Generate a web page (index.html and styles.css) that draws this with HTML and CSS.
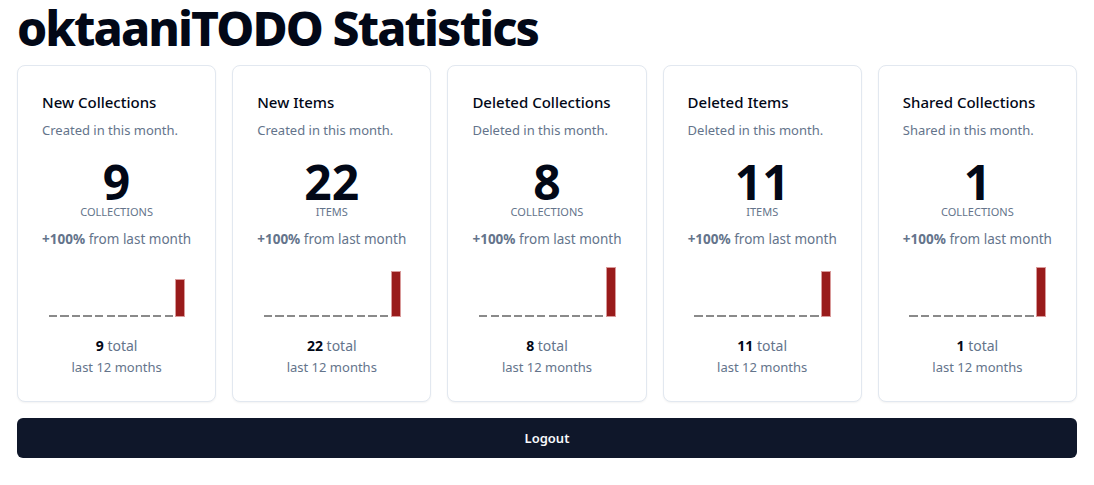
FILE: index.html
```html
<!DOCTYPE html>
<html lang="en">
<head>
<meta charset="utf-8">
<title>oktaaniTODO Statistics</title>
<link rel="stylesheet" href="styles.css">
</head>
<body>
<main class="page">
  <h1 class="title">oktaaniTODO Statistics</h1>
  <section class="cards">
    <article class="card">
      <header class="card-header">
        <h2 class="card-title">New Collections</h2>
        <p class="card-desc">Created in this month.</p>
      </header>
      <div class="card-content">
        <div class="big">9</div>
        <div class="unit">COLLECTIONS</div>
        <div class="change"><b>+100%</b> from last month</div>
        <div class="chart">
          <span class="slot"><i class="zero"></i></span><span class="slot"><i class="zero"></i></span><span class="slot"><i class="zero"></i></span><span class="slot"><i class="zero"></i></span><span class="slot"><i class="zero"></i></span><span class="slot"><i class="zero"></i></span><span class="slot"><i class="zero"></i></span><span class="slot"><i class="zero"></i></span><span class="slot"><i class="zero"></i></span><span class="slot"><i class="zero"></i></span><span class="slot"><i class="zero"></i></span><span class="slot"><i class="bar" style="height:38px"></i></span>
        </div>
        <div class="total"><b>9</b> total</div>
        <div class="period">last 12 months</div>
      </div>
    </article>
    <article class="card">
      <header class="card-header">
        <h2 class="card-title">New Items</h2>
        <p class="card-desc">Created in this month.</p>
      </header>
      <div class="card-content">
        <div class="big">22</div>
        <div class="unit">ITEMS</div>
        <div class="change"><b>+100%</b> from last month</div>
        <div class="chart">
          <span class="slot"><i class="zero"></i></span><span class="slot"><i class="zero"></i></span><span class="slot"><i class="zero"></i></span><span class="slot"><i class="zero"></i></span><span class="slot"><i class="zero"></i></span><span class="slot"><i class="zero"></i></span><span class="slot"><i class="zero"></i></span><span class="slot"><i class="zero"></i></span><span class="slot"><i class="zero"></i></span><span class="slot"><i class="zero"></i></span><span class="slot"><i class="zero"></i></span><span class="slot"><i class="bar" style="height:46px"></i></span>
        </div>
        <div class="total"><b>22</b> total</div>
        <div class="period">last 12 months</div>
      </div>
    </article>
    <article class="card">
      <header class="card-header">
        <h2 class="card-title">Deleted Collections</h2>
        <p class="card-desc">Deleted in this month.</p>
      </header>
      <div class="card-content">
        <div class="big">8</div>
        <div class="unit">COLLECTIONS</div>
        <div class="change"><b>+100%</b> from last month</div>
        <div class="chart">
          <span class="slot"><i class="zero"></i></span><span class="slot"><i class="zero"></i></span><span class="slot"><i class="zero"></i></span><span class="slot"><i class="zero"></i></span><span class="slot"><i class="zero"></i></span><span class="slot"><i class="zero"></i></span><span class="slot"><i class="zero"></i></span><span class="slot"><i class="zero"></i></span><span class="slot"><i class="zero"></i></span><span class="slot"><i class="zero"></i></span><span class="slot"><i class="zero"></i></span><span class="slot"><i class="bar" style="height:50px"></i></span>
        </div>
        <div class="total"><b>8</b> total</div>
        <div class="period">last 12 months</div>
      </div>
    </article>
    <article class="card">
      <header class="card-header">
        <h2 class="card-title">Deleted Items</h2>
        <p class="card-desc">Deleted in this month.</p>
      </header>
      <div class="card-content">
        <div class="big">11</div>
        <div class="unit">ITEMS</div>
        <div class="change"><b>+100%</b> from last month</div>
        <div class="chart">
          <span class="slot"><i class="zero"></i></span><span class="slot"><i class="zero"></i></span><span class="slot"><i class="zero"></i></span><span class="slot"><i class="zero"></i></span><span class="slot"><i class="zero"></i></span><span class="slot"><i class="zero"></i></span><span class="slot"><i class="zero"></i></span><span class="slot"><i class="zero"></i></span><span class="slot"><i class="zero"></i></span><span class="slot"><i class="zero"></i></span><span class="slot"><i class="zero"></i></span><span class="slot"><i class="bar" style="height:46px"></i></span>
        </div>
        <div class="total"><b>11</b> total</div>
        <div class="period">last 12 months</div>
      </div>
    </article>
    <article class="card">
      <header class="card-header">
        <h2 class="card-title">Shared Collections</h2>
        <p class="card-desc">Shared in this month.</p>
      </header>
      <div class="card-content">
        <div class="big">1</div>
        <div class="unit">COLLECTIONS</div>
        <div class="change"><b>+100%</b> from last month</div>
        <div class="chart">
          <span class="slot"><i class="zero"></i></span><span class="slot"><i class="zero"></i></span><span class="slot"><i class="zero"></i></span><span class="slot"><i class="zero"></i></span><span class="slot"><i class="zero"></i></span><span class="slot"><i class="zero"></i></span><span class="slot"><i class="zero"></i></span><span class="slot"><i class="zero"></i></span><span class="slot"><i class="zero"></i></span><span class="slot"><i class="zero"></i></span><span class="slot"><i class="zero"></i></span><span class="slot"><i class="bar" style="height:50px"></i></span>
        </div>
        <div class="total"><b>1</b> total</div>
        <div class="period">last 12 months</div>
      </div>
    </article>
  </section>
  <button class="logout" type="button">Logout</button>
</main>
</body>
</html>
```
FILE: styles.css
```css
* { box-sizing: border-box; }
html, body { margin: 0; padding: 0; background: #ffffff; }
body {
  font-family: "Noto Sans", "Open Sans", "Liberation Sans", sans-serif;
  color: #020817;
}
.page {
  padding: 0 17px 0 17px;
  display: flex;
  flex-direction: column;
}
.title {
  margin: 0;
  font-size: 48px;
  line-height: 56px;
  font-weight: 800;
  letter-spacing: -1.9px;
  color: #020817;
}
.cards {
  margin-top: 9px;
  display: grid;
  grid-template-columns: repeat(5, 1fr);
  gap: 16px;
}
.card {
  border: 1px solid #e2e8f0;
  border-radius: 8px;
  background: #fff;
  box-shadow: 0 1px 2px rgba(0,0,0,0.05);
}
.card-header {
  padding: 24px 24px 24px 24px;
  display: flex;
  flex-direction: column;
  gap: 6px;
}
.card-title {
  margin: 0;
  font-size: 15px;
  line-height: 24px;
  font-weight: 500;
}
.card-desc {
  margin: 0;
  font-size: 13px;
  line-height: 20px;
  color: #64748b;
}
.card-content {
  padding: 0 24px 24px 24px;
  display: flex;
  flex-direction: column;
  align-items: center;
  text-align: center;
}
.big {
  margin-top: -3px;
  font-size: 48px;
  line-height: 42px;
  font-weight: 700;
}
.unit {
  margin-top: 1px;
  font-size: 11px;
  line-height: 16px;
  color: #64748b;
}
.change {
  margin-top: 9px;
  font-size: 13.5px;
  line-height: 20px;
  color: #64748b;
}
.change b { font-weight: 700; }
.chart {
  margin-top: 8px;
  height: 60px;
  display: flex;
  align-items: flex-end;
}
.slot {
  width: 11.6px;
  display: flex;
  justify-content: center;
  align-items: flex-end;
}
.zero {
  display: block;
  width: 8.5px;
  height: 2px;
  background: #8a8a8a;
}
.bar {
  display: block;
  width: 10px;
  background: #991b1b;
  border: 1px solid #d99a9a;
}
.total {
  margin-top: 19px;
  font-size: 14px;
  line-height: 20px;
  color: #64748b;
}
.total b { color: #020817; font-weight: 700; }
.period {
  margin-top: 1px;
  font-size: 13px;
  line-height: 20px;
  color: #64748b;
}
.logout {
  margin-top: 16px;
  height: 40px;
  border: none;
  border-radius: 6px;
  background: #0f172a;
  color: #f8fafc;
  font-family: inherit;
  font-size: 13px;
  font-weight: 600;
  cursor: pointer;
}
```
